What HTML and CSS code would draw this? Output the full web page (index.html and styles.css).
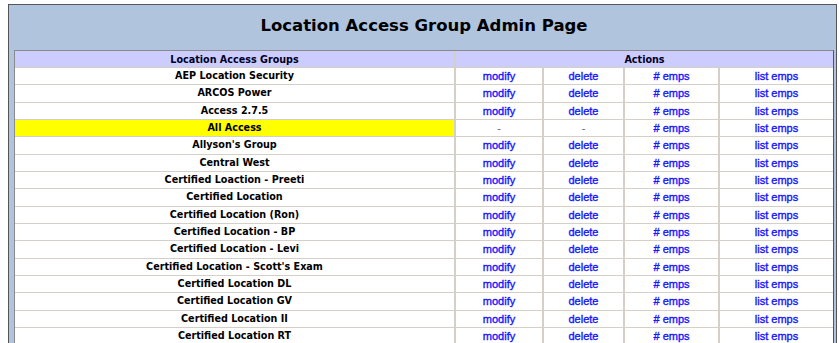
FILE: index.html
```html
<!DOCTYPE html>
<html>
<head>
<meta charset="utf-8">
<title>Location Access Group Admin Page</title>
<link rel="stylesheet" href="styles.css">
</head>
<body>
<div class="panel">
  <h1 class="title">Location Access Group Admin Page</h1>
  <table class="grid">
    <colgroup>
      <col class="c-name"><col class="c-mod"><col class="c-del"><col class="c-num"><col class="c-list">
    </colgroup>
    <thead>
      <tr><th>Location Access Groups</th><th colspan="4">Actions</th></tr>
    </thead>
    <tbody>
      <tr><td class="name">AEP Location Security</td><td><a href="#">modify</a></td><td><a href="#">delete</a></td><td><a href="#"># emps</a></td><td><a href="#">list emps</a></td></tr>
      <tr><td class="name">ARCOS Power</td><td><a href="#">modify</a></td><td><a href="#">delete</a></td><td><a href="#"># emps</a></td><td><a href="#">list emps</a></td></tr>
      <tr><td class="name">Access 2.7.5</td><td><a href="#">modify</a></td><td><a href="#">delete</a></td><td><a href="#"># emps</a></td><td><a href="#">list emps</a></td></tr>
      <tr><td class="name hl">All Access</td><td class="na">-</td><td class="na">-</td><td><a href="#"># emps</a></td><td><a href="#">list emps</a></td></tr>
      <tr><td class="name">Allyson's Group</td><td><a href="#">modify</a></td><td><a href="#">delete</a></td><td><a href="#"># emps</a></td><td><a href="#">list emps</a></td></tr>
      <tr><td class="name">Central West</td><td><a href="#">modify</a></td><td><a href="#">delete</a></td><td><a href="#"># emps</a></td><td><a href="#">list emps</a></td></tr>
      <tr><td class="name">Certified Loaction - Preeti</td><td><a href="#">modify</a></td><td><a href="#">delete</a></td><td><a href="#"># emps</a></td><td><a href="#">list emps</a></td></tr>
      <tr><td class="name">Certified Location</td><td><a href="#">modify</a></td><td><a href="#">delete</a></td><td><a href="#"># emps</a></td><td><a href="#">list emps</a></td></tr>
      <tr><td class="name">Certified Location (Ron)</td><td><a href="#">modify</a></td><td><a href="#">delete</a></td><td><a href="#"># emps</a></td><td><a href="#">list emps</a></td></tr>
      <tr><td class="name">Certified Location - BP</td><td><a href="#">modify</a></td><td><a href="#">delete</a></td><td><a href="#"># emps</a></td><td><a href="#">list emps</a></td></tr>
      <tr><td class="name">Certified Location - Levi</td><td><a href="#">modify</a></td><td><a href="#">delete</a></td><td><a href="#"># emps</a></td><td><a href="#">list emps</a></td></tr>
      <tr><td class="name">Certified Location - Scott's Exam</td><td><a href="#">modify</a></td><td><a href="#">delete</a></td><td><a href="#"># emps</a></td><td><a href="#">list emps</a></td></tr>
      <tr><td class="name">Certified Location DL</td><td><a href="#">modify</a></td><td><a href="#">delete</a></td><td><a href="#"># emps</a></td><td><a href="#">list emps</a></td></tr>
      <tr><td class="name">Certified Location GV</td><td><a href="#">modify</a></td><td><a href="#">delete</a></td><td><a href="#"># emps</a></td><td><a href="#">list emps</a></td></tr>
      <tr><td class="name">Certified Location II</td><td><a href="#">modify</a></td><td><a href="#">delete</a></td><td><a href="#"># emps</a></td><td><a href="#">list emps</a></td></tr>
      <tr><td class="name">Certified Location RT</td><td><a href="#">modify</a></td><td><a href="#">delete</a></td><td><a href="#"># emps</a></td><td><a href="#">list emps</a></td></tr>
    </tbody>
  </table>
</div>
</body>
</html>
```

FILE: styles.css
```css
html, body {
  margin: 0;
  background: #ffffff;
}
body {
  padding: 4px 2px 0 8px;
  overflow: hidden;
}
.panel {
  background: #b0c4de;
  border: 1px solid #555555;
  border-bottom: none;
  padding: 0 2px 0 5px;
}
.title {
  margin: 0;
  height: 45px;
  line-height: 42px;
  text-align: center;
  font-family: "DejaVu Sans", Verdana, sans-serif;
  font-weight: bold;
  font-size: 16.5px;
  color: #000000;
}
.grid {
  width: 100%;
  border-collapse: separate;
  border-spacing: 0;
  border-top: 1px solid #8a8a8a;
  border-left: 1px solid #8a8a8a;
  border-right: 1px solid #555555;
  table-layout: fixed;
  background: #ffffff;
}
.c-name { width: 441px; }
.c-mod { width: 88px; }
.c-del { width: 81px; }
.c-num { width: 95px; }
.grid th {
  background: #ccccff;
  font-family: "DejaVu Sans Condensed", "DejaVu Sans", Verdana, sans-serif;
  font-stretch: condensed;
  font-weight: bold;
  font-size: 10.7px;
  color: #000022;
  height: 16px;
  padding: 0;
  text-align: center;
  border-bottom: 1px solid #d4d0c8;
  border-right: 2px solid #d4d0c8;
}
.grid th:last-child { border-right: none; }
.grid td {
  height: 16.33px;
  padding: 0;
  text-align: center;
  border-bottom: 1px solid #d4d0c8;
  border-right: 2px solid #d4d0c8;
  font-family: "Liberation Sans", Arial, sans-serif;
  font-size: 11px;
  line-height: 14px;
}
.grid td:last-child { border-right: none; }
.grid td.name {
  font-family: "DejaVu Sans Condensed", "DejaVu Sans", Verdana, sans-serif;
  font-stretch: condensed;
  font-weight: bold;
  font-size: 10.7px;
  color: #000000;
}
.grid td.hl { background: #ffff00; }
.grid td.na { color: #666666; }
.grid a {
  color: #1414ff;
  text-decoration: none;
  -webkit-text-stroke: 0.35px #1414ff;
}
```
